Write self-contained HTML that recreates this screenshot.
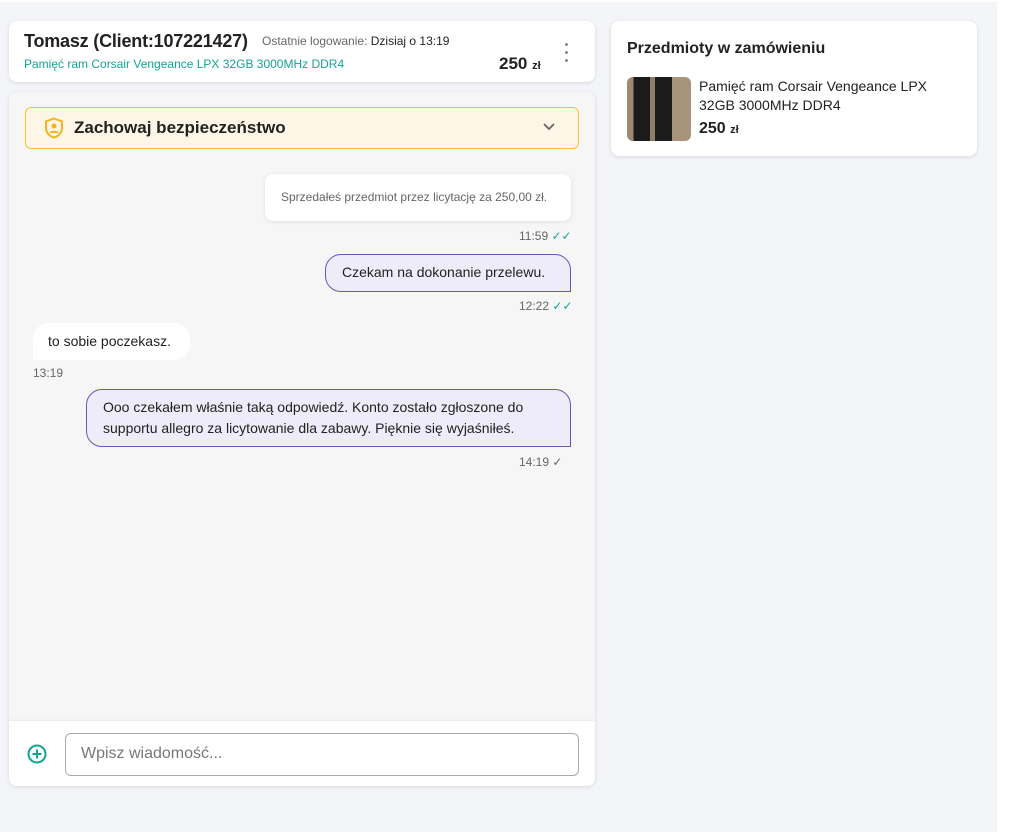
<!DOCTYPE html>
<html><head><meta charset="utf-8"><style>
*{box-sizing:border-box;margin:0;padding:0}
body{width:1009px;height:832px;background:#fff;font-family:"Liberation Sans",sans-serif;position:relative;overflow:hidden;color:#222}
.bg{position:absolute;left:0;top:2px;width:997px;height:830px;background:#f3f5f9}
.card{position:absolute;background:#fff;border-radius:8px;box-shadow:0 1px 4px rgba(0,0,0,.12)}
.t{position:absolute;white-space:nowrap}
.bub{position:absolute;font-size:14px;line-height:21px;color:#222}
.time{position:absolute;font-size:12px;color:#666}
</style></head><body>
<div class="bg"></div>
<div class="card" style="left:9px;top:21px;width:586px;height:61px">
 <div class="t" style="left:15px;top:10px;font-size:18px;font-weight:bold;color:#222;letter-spacing:-0.2px">Tomasz (Client:107221427)</div>
 <div class="t" style="left:253px;top:13px;font-size:12px;color:#666">Ostatnie logowanie: <span style="color:#222">Dzisiaj o 13:19</span></div>
 <div class="t" style="left:15px;top:36px;font-size:12px;color:#13a394">Pamięć ram Corsair Vengeance LPX 32GB 3000MHz DDR4</div>
 <div class="t" style="left:490px;top:33px;font-size:17px;font-weight:bold">250 <span style="font-size:11px">zł</span></div>
 <div style="position:absolute;left:556px;top:22px;width:3px;height:3px;border-radius:2px;background:#888;box-shadow:0 8px 0 #888,0 16px 0 #888"></div>
</div>
<div class="card" style="left:9px;top:92px;width:586px;height:694px;background:#f6f6f6;overflow:hidden">
 <div style="position:absolute;left:16px;top:15px;width:554px;height:42px;background:#fdf5e6;border:1px solid #f5c330;border-radius:6px">
  <svg style="position:absolute;left:18px;top:9px" width="20" height="22" viewBox="0 0 20 22"><path d="M10 1.5 L18 4.5 V11 C18 16 14 19.5 10 20.5 C6 19.5 2 16 2 11 V4.5 Z" fill="#fdf5e6" stroke="#f5b41c" stroke-width="2"/><circle cx="10" cy="9" r="2.5" fill="#f5b41c"/><path d="M5.5 16 C6 13 14 13 14.5 16" fill="#f5b41c"/></svg>
  <div class="t" style="left:48px;top:10px;font-size:17px;font-weight:bold;color:#222">Zachowaj bezpieczeństwo</div>
  <svg style="position:absolute;left:516px;top:14px" width="14" height="10" viewBox="0 0 14 10"><path d="M2 2 L7 7 L12 2" fill="none" stroke="#666" stroke-width="1.8"/></svg>
 </div>
 <div style="position:absolute;left:256px;top:82px;width:306px;height:47px;background:#fff;border-radius:8px;box-shadow:0 1px 4px rgba(0,0,0,.1)"><div class="t" style="left:16px;top:16px;font-size:12px;color:#666">Sprzedałeś przedmiot przez licytację za 250,00 zł.</div></div>
 <div class="time" style="left:510px;top:137px">11:59 <span style="color:#13a394">✓✓</span></div>
 <div class="bub" style="left:316px;top:162px;width:246px;height:38px;background:#eeecf8;border:1px solid #6957b8;border-radius:16px 16px 0 16px;padding:7px 16px">Czekam na dokonanie przelewu.</div>
 <div class="time" style="left:510px;top:207px">12:22 <span style="color:#13a394">✓✓</span></div>
 <div class="bub" style="left:24px;top:231px;width:157px;height:37px;background:#fff;border-radius:16px 16px 16px 0;padding:8px 15px">to sobie poczekasz.</div>
 <div class="time" style="left:24px;top:274px">13:19</div>
 <div class="bub" style="left:77px;top:297px;width:485px;height:58px;background:#eeecf8;border:1px solid #6957b8;border-radius:16px 16px 0 16px;padding:7px 16px">Ooo czekałem właśnie taką odpowiedź. Konto zostało zgłoszone do supportu allegro za licytowanie dla zabawy. Pięknie się wyjaśniłeś.</div>
 <div class="time" style="left:510px;top:363px">14:19 <span style="color:#666">✓</span></div>
 <div style="position:absolute;left:0;top:629px;width:586px;height:65px;background:#fff;box-shadow:0 -1px 2px rgba(0,0,0,.05)">
  <svg style="position:absolute;left:18px;top:23px" width="20" height="20" viewBox="0 0 20 20"><circle cx="10" cy="10" r="8.5" fill="none" stroke="#13a394" stroke-width="2"/><path d="M10 5.5V14.5M5.5 10H14.5" stroke="#13a394" stroke-width="2"/></svg>
  <div style="position:absolute;left:56px;top:12px;width:514px;height:43px;border:1px solid #aaa;border-radius:6px"><div class="t" style="left:15px;top:11px;font-size:16px;color:#777">Wpisz wiadomość...</div></div>
 </div>
</div>
<div class="card" style="left:611px;top:21px;width:366px;height:135px">
 <div class="t" style="left:16px;top:19px;font-size:16px;font-weight:bold;color:#222">Przedmioty w zamówieniu</div>
 <div style="position:absolute;left:16px;top:56px;width:64px;height:64px;border-radius:6px;background:linear-gradient(90deg,#9c8a70 0,#9c8a70 10%,#1b1b1b 10%,#1b1b1b 36%,#8f7e66 36%,#8f7e66 44%,#1b1b1b 44%,#1b1b1b 70%,#a89479 70%)"></div>
 <div class="t" style="left:88px;top:56px;font-size:14px;line-height:19px;color:#222;white-space:normal;width:260px">Pamięć ram Corsair Vengeance LPX 32GB 3000MHz DDR4</div>
 <div class="t" style="left:88px;top:99px;font-size:16px;font-weight:bold">250 <span style="font-size:11px">zł</span></div>
</div>
</body></html>
